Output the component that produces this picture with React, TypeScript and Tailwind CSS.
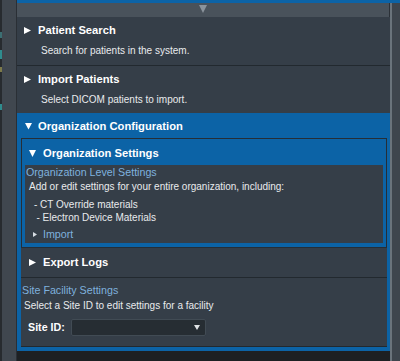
import React from "react";

// Small triangle glyphs used by the accordion headers
function Tri({ dir, w = 7, h = 7, color = "#ffffff" }: { dir: "right" | "down"; w?: number; h?: number; color?: string }) {
  const pts = dir === "right" ? `0,0 ${w},${h / 2} 0,${h}` : `0,0 ${w},0 ${w / 2},${h}`;
  return (
    <svg width={w} height={h} viewBox={`0 0 ${w} ${h}`} className="shrink-0">
      <polygon points={pts} fill={color} />
    </svg>
  );
}

function CollapsedSection({ title, desc, last }: { title: string; desc: string; last?: boolean }) {
  return (
    <div className={`flex flex-col bg-[#353e48] pt-[6px] ${last ? "h-[47px]" : "h-[49px] border-b border-[#22292f]"}`}>
      <div className="flex h-[14px] items-center pl-[7px]">
        <Tri dir="right" />
        <span className="ml-[7px] text-[11.2px] font-bold leading-[14px] text-white">{title}</span>
      </div>
      <p className="mt-[7px] pl-[24px] text-[10px] leading-[13px] text-[#e9ebed]">{desc}</p>
    </div>
  );
}

export default function App() {
  return (
    <div className="flex h-[361px] w-[400px] overflow-hidden bg-[#1d2023] font-['Liberation_Sans',Arial,sans-serif]">
      {/* far left edge */}
      <div className="flex w-[2px] flex-col bg-[#272b2f]">
        <div className="mt-[32px] h-[6px] bg-[#3c6f73]" />
        <div className="mt-[12px] h-[9px] bg-[#2f8c8e]" />
        <div className="mt-[8px] h-[5px] bg-[#7d7a4a]" />
        <div className="mt-[32px] h-[6px] bg-[#2f8c8e]" />
      </div>
      <div className="w-[15px] border-r border-[#2a2f35] bg-[#40474f]" />

      <div className="flex flex-1 border-t-[3px] border-[#0c63a6]">
        {/* main column */}
        <div className="flex w-[373px] flex-col">
          <div className="flex h-[14px] items-center justify-center border-r border-[#2b3138] bg-[#49525b]">
            <div className="-mt-[2px]">
              <Tri dir="down" w={8} h={8} color="#8a939c" />
            </div>
          </div>

          <CollapsedSection title="Patient Search" desc="Search for patients in the system." />
          <CollapsedSection title="Import Patients" desc="Select DICOM patients to import." last />

          {/* Organization Configuration (expanded) */}
          <div className="flex flex-col bg-[#0c63a6] pb-[4px] pl-[4px] pr-[3px]">
            <div className="flex h-[25px] items-start pl-[4px] pt-[6px]">
              <div className="flex h-[14px] items-center">
                <div className="mt-[1px]">
                  <Tri dir="down" w={7} h={6.5} />
                </div>
                <span className="ml-[6px] text-[11.2px] font-bold leading-[14px] text-white">Organization Configuration</span>
              </div>
            </div>

            <div className="flex flex-col bg-[#353e48]">
              {/* Organization Settings (expanded) */}
              <div className="flex flex-col border border-[#262e36] bg-[#0c63a6] px-[3px] pb-[4px]">
                <div className="flex h-[26px] items-start pl-[4px] pt-[7px]">
                  <div className="flex h-[14px] items-center">
                    <Tri dir="down" w={7} h={7} />
                    <span className="ml-[7px] text-[11.2px] font-bold leading-[14px] text-white">Organization Settings</span>
                  </div>
                </div>
                <div className="flex flex-col bg-[#353e48] pb-[2px] pt-[1px]">
                  <p className="pl-[1px] text-[10.7px] leading-[13px] text-[#7fb1de]">Organization Level Settings</p>
                  <p className="mt-[1px] pl-[4px] text-[10px] leading-[13px] text-[#e9ebed]">
                    Add or edit settings for your entire organization, including:
                  </p>
                  <p className="mt-[5px] pl-[9px] text-[10px] leading-[13px] text-[#e9ebed]">- CT Override materials</p>
                  <p className="pl-[11.5px] text-[10px] leading-[13px] text-[#e9ebed]">- Electron Device Materials</p>
                  <div className="mt-[4px] flex h-[13px] items-center pl-[8px]">
                    <Tri dir="right" w={4} h={5} color="#d7dde3" />
                    <span className="ml-[6px] text-[10.7px] leading-[13px] text-[#7fb1de]">Import</span>
                  </div>
                </div>
              </div>

              {/* Export Logs (collapsed) */}
              <div className="flex h-[30px] items-start border-b border-[#22292f] pl-[8px] pt-[7px]">
                <div className="flex h-[14px] items-center">
                  <Tri dir="right" />
                  <span className="ml-[7px] text-[11.2px] font-bold leading-[14px] text-white">Export Logs</span>
                </div>
              </div>

              {/* Site Facility Settings */}
              <div className="flex h-[69px] flex-col border-b border-[#22292f] pt-[6px]">
                <p className="pl-[1px] text-[10.7px] leading-[13px] text-[#7fb1de]">Site Facility Settings</p>
                <p className="mt-[2px] pl-[3px] text-[10px] leading-[13px] text-[#e9ebed]">
                  Select a Site ID to edit settings for a facility
                </p>
                <div className="mt-[7px] flex h-[17px] items-center pl-[7px]">
                  <span className="w-[43px] text-[10.7px] font-bold leading-[13px] text-white">Site ID:</span>
                  <div className="flex h-[17px] w-[135px] items-center justify-end rounded-[2px] border border-[#414b54] bg-[#262d33] pr-[5px]">
                    <Tri dir="down" w={6} h={5} color="#dfe2e5" />
                  </div>
                </div>
              </div>
            </div>
          </div>

          <div className="flex-1 bg-[#1d2023]" />
        </div>

        {/* right edge / scrollbar */}
        <div className="w-[2px] bg-[#6a737b]" />
        <div className="flex-1 bg-[#3e454d]" />
      </div>
    </div>
  );
}
